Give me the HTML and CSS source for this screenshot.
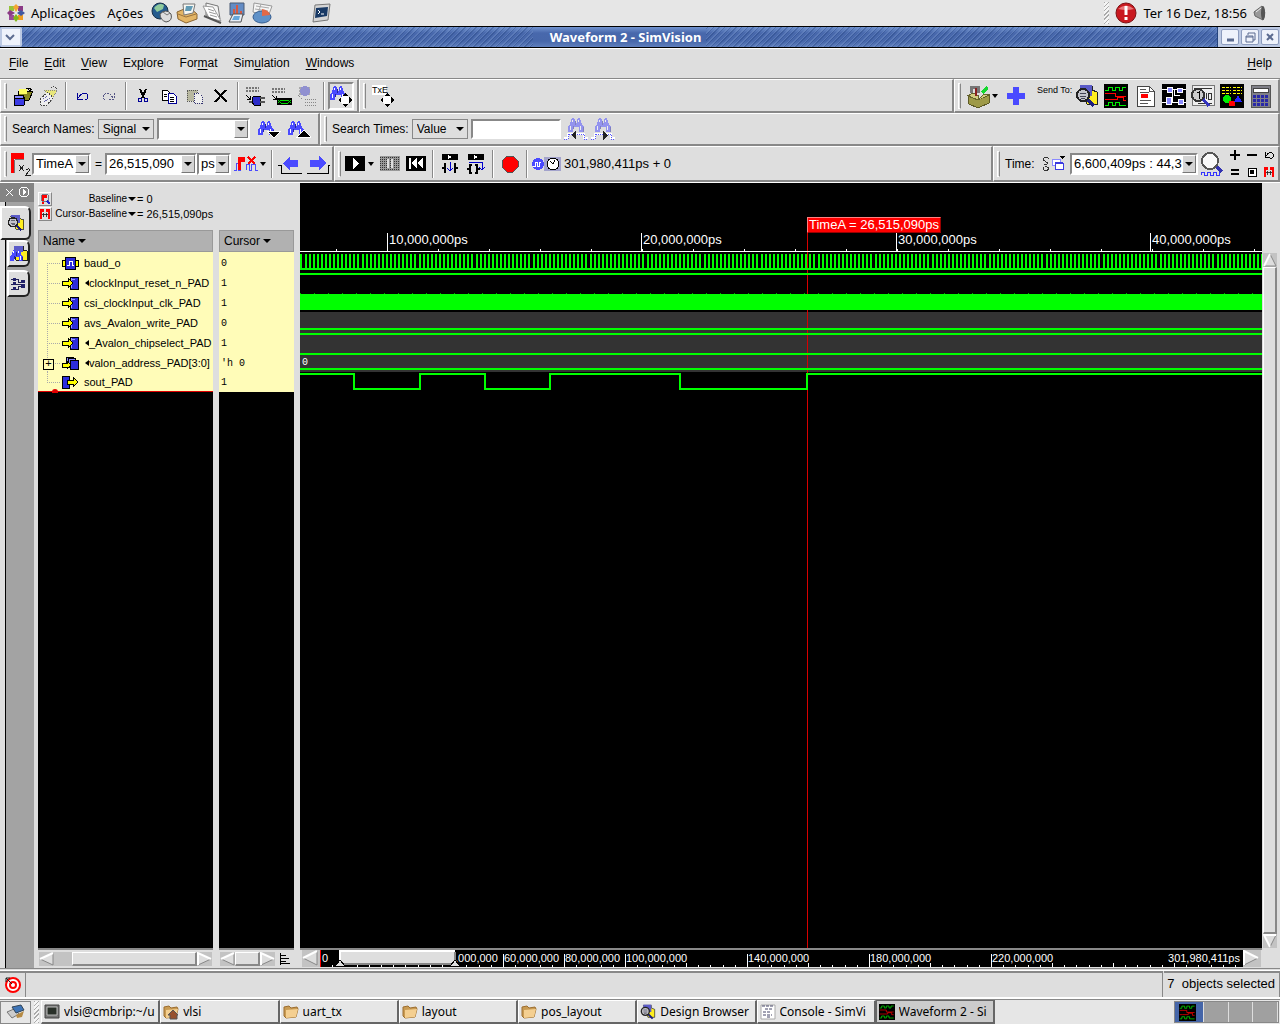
FILE: index.html
```
<!DOCTYPE html>
<html lang="pt-BR">
<head>
    <meta charset="utf-8">
    <title>Waveform 2 - SimVision</title>
    <link rel="stylesheet" href="styles.css">
</head>
<body>
    <!-- shared icons -->
    <svg class="defs" width="0" height="0">
        <symbol id="binoc" viewBox="0 0 16 16"><path d="M0 15V10L2 7L4 1H6L7 3V6H9V3L10 1H12L14 7L16 10V15H11V10H5V15Z" fill="#4a4aff"/><path d="M2 9H3V13H2ZM12 9H13V13H12ZM4 3H5V5H4ZM10 3H11V5H10Z" fill="#fff"/><path d="M5 9H6V12H5ZM15 10H16V15H15ZM7 4H8V8H7Z" fill="#2525a0"/></symbol>
        <symbol id="cross" viewBox="0 0 14 14"><path d="M7 0L10 4H11V5L14 7L10 10L7 14L4 10L0 7L4 4Z" fill="#fff"/><path d="M7 0L10 3H4ZM7 14L4 11H10ZM0 7L3 4V10ZM14 7L11 4V10Z" fill="#000"/></symbol>
        <symbol id="lens" viewBox="0 0 24 24"><path d="M5 2H17V6L22 8V20H12Z" fill="#ffee20" stroke="#222"/><path d="M5 1H17V12H5Z" fill="#5b5bc8"/><path d="M12 15L19 22" stroke="#202080" stroke-width="3"/><circle cx="8" cy="11" r="6" fill="#c4c4cc" stroke="#222" stroke-width="2"/><path d="M5 9H11M5 12H11M6 14H10" stroke="#445"/></symbol>
        <symbol id="waves" viewBox="0 0 24 24"><path fill="#000" d="M0 0H24V24H0Z"/><path d="M1 6H4V3H8V6H11V3H15V6H18V3H22M1 21H4V18H8V21H11V18H15V21H22" fill="none" stroke="#0e0"/><path d="M1 9H11V12H22M1 15H5M5 15H13V13H19V16H22" fill="none" stroke="#f00"/></symbol>
        <symbol id="folder" viewBox="0 0 16 16"><path d="M1 3L6 2L8 4L14 3L15 5L13 13L3 14L1 12Z" fill="#c99b52" stroke="#9c6d2f"/><path d="M3 6L15 5L13 13L3 14Z" fill="#f4cf91"/></symbol>
        <symbol id="padin" viewBox="0 0 18 14"><path d="M9 1H17V13H9Z" fill="#2d2ddc" stroke="#000"/><path d="M10 3H14M10 2V12" stroke="#9a9aff"/><path d="M1 5H7V2L12 7L7 12V9H1Z" fill="#ff0" stroke="#000"/></symbol>
        <symbol id="redflag" viewBox="0 0 14 14"><path d="M1 1H6V5H3V13H1ZM8 1H13V13H11V5H8Z" fill="#f00"/><path d="M3 8H11M5 6V10M9 6V10" stroke="#222"/></symbol>
        <symbol id="stepbox" viewBox="0 0 18 20"><path d="M1 0H17V6H1Z" fill="#000"/><path d="M7 1L11 3L7 5Z" fill="#fff"/></symbol>
    </svg>

    <header class="panel">
        <svg width="18" height="18" viewBox="0 0 18 18"><path d="M2 2H7V7H2Z" fill="#98c33a"/><path d="M11 2H16V7H11Z" fill="#8b3a86"/><path d="M2 11H7V16H2Z" fill="#9a4b98"/><path d="M11 11H16V16H11Z" fill="#f19c20"/><path d="M9 0L12 3L9 8L6 3Z" fill="#f4a630"/><path d="M0 9L3 6L8 9L3 12Z" fill="#8b3a86"/><path d="M18 9L14 6L10 9L14 12Z" fill="#4158a0"/><path d="M9 18L6 14L9 10L12 14Z" fill="#82b819"/></svg>
        <button>Aplicações</button>
        <button>Ações</button>
        <div class="launchers">
            <svg width="22" height="22" viewBox="0 0 22 22"><circle cx="9" cy="9" r="8" fill="#245b8e" stroke="#183048"/><path d="M3 6Q8 0 13 3L12 7L6 10Z" fill="#8fca9c"/><path d="M9 12Q15 6 20 12Q22 19 15 20Q9 18 9 12Z" fill="#ddd" stroke="#555"/><path d="M12 10L16 13L19 11" fill="none" stroke="#777"/></svg>
            <svg width="22" height="22" viewBox="0 0 22 22"><path d="M1 10L13 5L21 12V17L10 21L2 17Z" fill="#e3b565" stroke="#8a6431"/><path d="M7 2H19L17 11L8 13Z" fill="#f7f7f2" stroke="#777"/><path d="M10 4H17L15 9H9Z" fill="#629bb5"/><path d="M2 12L10 15L20 12" fill="none" stroke="#9a723c"/></svg>
            <svg width="22" height="22" viewBox="0 0 22 22"><path d="M5 1L17 4L19 17L5 13Z" fill="#f4f4f4" stroke="#777"/><path d="M2 4L12 5L20 19L8 16Z" fill="#fff" stroke="#999"/><path d="M7 7L13 9M8 10L15 12M9 13L16 15" stroke="#999"/><path d="M3 14L20 21" stroke="#555" stroke-width="2"/></svg>
            <svg width="22" height="22" viewBox="0 0 22 22"><path d="M4 1H18V13H4Z" fill="#638cc5" stroke="#4b5b75"/><path d="M8 7V13M11 3V13M15 9V13" stroke="#d55a42" stroke-width="2"/><path d="M7 12H17L15 20H3Z" fill="#e7edf5" stroke="#555"/><path d="M8 14H14L13 18H6Z" fill="#65a7db"/></svg>
            <svg width="23" height="22" viewBox="0 0 23 22"><path d="M3 1L21 4L17 15L2 10Z" fill="#f5f5f5" stroke="#999"/><path d="M5 4L18 6M4 7L17 9M10 2L7 12" stroke="#aaa"/><ellipse cx="11" cy="15" rx="9" ry="6" fill="#5f91c8" stroke="#345d90"/><path d="M11 14V7Q18 8 19 13Z" fill="#e36947"/></svg>
        </div>
        <svg class="terminal" width="20" height="20" viewBox="0 0 20 20"><path d="M3 2L18 1L16 17L1 19Z" fill="#d5d5d5" stroke="#777"/><path d="M4 5L16 4L15 13L3 15Z" fill="#193a65"/><path d="M6 7L8 9L6 11M9 11H12" fill="none" stroke="#fff"/></svg>
        <div class="tray">
            <i class="grip"></i>
            <svg width="24" height="24" viewBox="0 0 24 24"><circle cx="12" cy="12" r="10" fill="#c9181f" stroke="#7c1115"/><path d="M4 8Q12 1 20 8Q12 10 4 8" fill="#e7787b"/><path d="M12 5V14M12 16V19" stroke="#fff" stroke-width="3"/></svg>
            <span>Ter 16 Dez, 18:56</span>
            <svg width="18" height="20" viewBox="0 0 18 20"><path d="M2 9L10 3Q15 9 11 17L3 13Z" fill="#999" stroke="#666"/><ellipse cx="11" cy="10" rx="2" ry="7" fill="#555"/><path d="M4 9L9 5" stroke="#eee"/></svg>
        </div>
    </header>

    <div class="titlebar">
        <button class="winbtn" aria-label="Window menu"><svg width="16" height="16"><path d="M4 6L8 10L12 6" fill="none" stroke="#5b6b90" stroke-width="2"/></svg></button>
        <div class="hatch"></div>
        <h1>Waveform 2 - SimVision</h1>
        <div class="hatch"></div>
        <div class="winbtns">
            <button class="winbtn" aria-label="Minimize"><svg width="16" height="16"><path d="M5 10H12" stroke="#5b6b90" stroke-width="3"/></svg></button>
            <button class="winbtn" aria-label="Restore"><svg width="16" height="16"><path d="M6 5V3H13V10H11M4 6H11V12H4Z M4 7H11" fill="none" stroke="#5b6b90"/></svg></button>
            <button class="winbtn" aria-label="Close"><svg width="16" height="16"><path d="M5 4L11 10M11 4L5 10" stroke="#5b6b90" stroke-width="2"/></svg></button>
        </div>
    </div>

    <nav class="menubar">
        <button><u>F</u>ile</button>
        <button><u>E</u>dit</button>
        <button><u>V</u>iew</button>
        <button>Ex<u>p</u>lore</button>
        <button>For<u>m</u>at</button>
        <button>Sim<u>u</u>lation</button>
        <button><u>W</u>indows</button>
        <button class="help"><u>H</u>elp</button>
    </nav>

    <div class="toolrow row1">
        <div class="band">
            <i class="handle"></i>
            <button class="tool" aria-label="Open database"><svg width="22" height="22"><path d="M6 6H21L17 15H8Z" fill="#8a8a20" stroke="#000"/><path d="M7 4H15V9H7Z" fill="#ffff62"/><path d="M14 3H18V6M16 4L18 6L20 4" fill="none" stroke="#000"/><path d="M2 12V20Q7 22 12 20V12Z" fill="#3b3be4" stroke="#000"/><ellipse cx="7" cy="12" rx="5" ry="2" fill="#8a8aff" stroke="#000"/></svg></button>
            <button class="tool" aria-label="Reload"><svg width="22" height="22"><path d="M6 5H19L13 16Z" fill="#e8e67a" stroke="#888" stroke-dasharray="1 1"/><path d="M2 14L10 7L15 13L8 21L3 20Z" fill="#eee" stroke="#444" stroke-dasharray="2 1"/><path d="M5 14L10 11M6 17L12 13" stroke="#66a" stroke-dasharray="1 1"/><path d="M13 3Q17 0 19 5" fill="none" stroke="#444" stroke-dasharray="1 1"/></svg></button>
            <i class="sep"></i>
            <button class="tool" aria-label="Undo"><svg width="16" height="14"><path d="M2 4V10H8M3 9Q8 2 12 5Q15 9 10 11" fill="none" stroke="#000096"/></svg></button>
            <button class="tool" aria-label="Redo"><svg width="16" height="14"><path d="M13 4V10H8M12 9Q8 2 4 5Q1 8 4 11" fill="none" stroke="#555585" stroke-dasharray="2 1"/></svg></button>
            <i class="sep"></i>
            <button class="tool" aria-label="Cut"><svg width="14" height="18"><path d="M4 2L8 11M10 2L6 11" stroke="#000" stroke-width="2"/><circle cx="4" cy="13" r="2" fill="none" stroke="#000096"/><circle cx="10" cy="13" r="2" fill="none" stroke="#000096"/></svg></button>
            <button class="tool" aria-label="Copy"><svg width="18" height="16"><path d="M2 2H7L10 5V12H2Z" fill="#fff" stroke="#000"/><path d="M8 5H13L16 8V15H8Z" fill="#fff" stroke="#000096"/><path d="M4 6H7M4 8H7M10 9H14M10 11H14M10 13H14" stroke="#000"/></svg></button>
            <button class="tool" aria-label="Paste"><svg width="18" height="18"><path d="M1 3H11V14H1Z" fill="#b8b8a0" stroke="#555" stroke-dasharray="1 1"/><path d="M8 6H13L16 9V16H8Z" fill="#eee" stroke="#333370" stroke-dasharray="1 1"/></svg></button>
            <button class="tool" aria-label="Delete"><svg width="16" height="16"><path d="M2 2L14 14M13 2L2 14" stroke="#000" stroke-width="2"/></svg></button>
            <i class="sep"></i>
            <button class="tool" aria-label="Probe"><svg width="22" height="22"><path d="M2 3H15M2 6H15" stroke="#777" stroke-width="2" stroke-dasharray="2 1"/><path d="M2 10L6 14V11M6 14H3" fill="none" stroke="#000"/><path d="M10 11H16V20H10L8 17V13Z" fill="#2b2bc8" stroke="#000"/><path d="M16 13H21M16 17H21M5 17H8" stroke="#555" stroke-width="2"/></svg></button>
            <button class="tool" aria-label="Trace"><svg width="22" height="22"><path d="M2 4H15M2 7H15" stroke="#777" stroke-width="2" stroke-dasharray="2 1"/><path d="M2 10L6 14V11M6 14H3" fill="none" stroke="#000"/><path d="M7 13H22V20H7Z" fill="#000"/><path d="M8 15L11 18H18L21 15M8 18L11 15H18L21 18" fill="none" stroke="#0d0"/></svg></button>
            <button class="tool" aria-label="Driver"><svg width="22" height="22"><path d="M3 3H15M3 6H15M3 9H15" stroke="#aaa" stroke-width="2" stroke-dasharray="2 1"/><circle cx="9" cy="6" r="5" fill="#9090d0"/><path d="M2 10L6 14M9 14H21M9 17H21M9 20H21" stroke="#888" stroke-dasharray="1 1"/></svg></button>
            <i class="sep"></i>
            <button class="tool pressed" aria-label="Find"><svg width="22" height="22"><use href="#binoc" width="16" height="16"/><use href="#cross" x="8" y="8" width="14" height="14"/></svg></button>
        </div>
        <div class="band grow">
            <i class="handle"></i>
            <button class="tool text" aria-label="Text search"><svg width="24" height="22"><path fill="#fff" d="M0 0H14V10H0Z"/><text x="0" y="8" class="txe">TxE</text><use href="#cross" x="8" y="8" width="14" height="14"/></svg></button>
        </div>
        <div class="band tools">
            <i class="handle"></i>
            <button class="tool caret" aria-label="Toolbox"><svg width="25" height="24"><path d="M2 12L12 16L23 11V19L12 24L3 20Z" fill="#9e9a48" stroke="#5d5a25"/><path d="M2 12L7 9L13 12L12 16ZM12 16L17 11L24 10" fill="#d2cc80" stroke="#66632b"/><path d="M5 9V3H12V9" fill="none" stroke="#777" stroke-width="3"/><path d="M15 8L21 1L22 5L18 10Z" fill="#16d830"/><path d="M10 4V12" stroke="#8b2020" stroke-width="2"/></svg></button>
            <button class="tool plus" aria-label="Add"><svg width="20" height="20"><path d="M7 1H13V7H19V13H13V19H7V13H1V7H7Z" fill="#4a4aff"/></svg></button>
            <span class="sendto">Send To:</span>
            <button class="tool send" aria-label="Design Browser"><svg width="24" height="24"><use href="#lens"/></svg></button>
            <button class="tool send" aria-label="Waveform"><svg width="24" height="24"><use href="#waves"/></svg></button>
            <button class="tool send" aria-label="Source"><svg width="24" height="24"><path d="M4 2H16L21 7V22H4Z" fill="#fff" stroke="#444"/><path d="M16 2V7H21M7 5H13M7 8H16M7 16H18M7 19H15" fill="none" stroke="#555"/><path d="M8 10H15V14H8Z" fill="#f00"/></svg></button>
            <button class="tool send" aria-label="Schematic"><svg width="24" height="24"><path d="M0 0H24V24H0Z" fill="#000"/><path d="M0 5H24M10 5V18H24M0 18H10M12 5V11H18" fill="none" stroke="#fff"/><path d="M5 3H10V8H5ZM15 4H20V8H15ZM4 13H9V20H4ZM16 15H21V20H16Z" fill="#8a8aff" stroke="#fff"/></svg></button>
            <button class="tool send" aria-label="Memory"><svg width="24" height="24"><path d="M1 1H23V21H1Z" fill="#eee" stroke="#777"/><path d="M3 4H21M15 9V15M17 9H20V15H17ZM7 19H21" fill="none" stroke="#333"/><path d="M12 15L18 22" stroke="#3333c0" stroke-width="3"/><circle cx="7" cy="11" r="6" fill="#ccc" stroke="#333" stroke-width="2"/><path d="M6 9L8 8V15" fill="none" stroke="#000"/></svg></button>
            <button class="tool send" aria-label="Register"><svg width="24" height="24"><path d="M0 0H24V24H0Z" fill="#000"/><path d="M2 3H11M13 3H22M2 6H11M13 6H22M2 9H11M13 9H22" stroke="#ff0" stroke-dasharray="3 1"/><circle cx="7" cy="15" r="4" fill="#0e0"/><path d="M9 17H15V22H9Z" fill="#f00"/><path d="M18 11L22 18H14Z" fill="#22f"/></svg></button>
            <button class="tool send" aria-label="Calculator"><svg width="24" height="24"><path d="M2 1H21V23H2Z" fill="#808088" stroke="#555"/><path d="M4 4H19V8H4Z" fill="#fff" stroke="#444"/><path d="M4 12H19M4 16H19M4 20H19" stroke="#2929a8" stroke-width="3" stroke-dasharray="3 1"/></svg></button>
        </div>
    </div>

    <div class="toolrow row2">
        <div class="band names">
            <i class="handle"></i>
            <label for="searchNames">Search Names:</label>
            <span class="drop"><select aria-label="Search names by"><option>Signal</option></select></span>
            <span class="combo pattern"><input id="searchNames" type="text"><button aria-label="History"></button></span>
            <button class="find" aria-label="Find next"><svg width="24" height="20"><use href="#binoc" x="1" y="1" width="16" height="16"/><path d="M10 12H24L17 19Z" fill="#000" stroke="#fff"/></svg></button>
            <button class="find" aria-label="Find previous"><svg width="24" height="20"><use href="#binoc" x="1" y="1" width="16" height="16"/><path d="M10 18H24L17 11Z" fill="#000" stroke="#fff"/></svg></button>
        </div>
        <div class="band grow">
            <i class="handle"></i>
            <label for="searchTimes">Search Times:</label>
            <span class="drop"><select aria-label="Search times by"><option>Value</option></select></span>
            <input class="plain" id="searchTimes" type="text">
            <button class="edge" aria-label="Previous edge" disabled><svg width="24" height="24"><use href="#binoc" x="4" width="16" height="16" opacity=".5"/><path d="M0 21H4V17H20V21H24" fill="none" stroke="#fff" stroke-width="2"/><path d="M0 22H4V17H20V22H24" fill="none" stroke="#55f" stroke-dasharray="1 1"/><path d="M7 18L12 14V23Z" fill="#222"/></svg></button>
            <button class="edge" aria-label="Next edge" disabled><svg width="24" height="24"><use href="#binoc" x="4" width="16" height="16" opacity=".5"/><path d="M0 21H4V17H20V21H24" fill="none" stroke="#fff" stroke-width="2"/><path d="M0 22H4V17H20V22H24" fill="none" stroke="#55f" stroke-dasharray="1 1"/><path d="M17 18L12 14V23Z" fill="#222"/></svg></button>
        </div>
    </div>

    <div class="toolrow row3">
        <div class="band times">
            <i class="handle"></i>
            <svg width="22" height="24"><path d="M1 1H14V7H4V21H1Z" fill="#f00"/><path d="M4 8V21M5 7H14" stroke="#777"/><path d="M9 13L14 19M14 13L9 19M16 18Q20 15 19 19L16 23H21" fill="none" stroke="#222"/></svg>
            <span class="combo cursor"><input type="text" aria-label="Cursor" value="TimeA"><button aria-label="Choose cursor"></button></span>
            <label for="cursorTime">=</label>
            <span class="combo value"><input id="cursorTime" type="text" value="26,515,090"><button aria-label="History"></button></span>
            <span class="combo unit"><input type="text" aria-label="Unit" value="ps"><button aria-label="Choose unit"></button></span>
            <button class="tool caret clear" aria-label="Remove cursor"><svg width="25" height="18"><path d="M0 15H2V8H4V15H6V8M12 15V9H15V15H17V9H21V15H24" fill="none" stroke="#4a4aff"/><path d="M4 2H11V7H7V15H4Z" fill="#f00"/><path d="M14 2L21 9M21 2L14 9" stroke="#f00" stroke-width="2"/></svg></button>
            <i class="sep"></i>
            <button class="tool wide" aria-label="Previous edge"><svg width="25" height="20"><path d="M0 11H3V19H24" fill="none" stroke="#000"/><path d="M5 9L12 2V6H20V13H12V17Z" fill="#4a4aff"/></svg></button>
            <button class="tool wide" aria-label="Next edge"><svg width="25" height="20"><path d="M1 19H22V11H24" fill="none" stroke="#000"/><path d="M20 9L13 2V6H4V13H13V17Z" fill="#4a4aff"/></svg></button>
        </div>
        <div class="band grow">
            <i class="handle"></i>
            <button class="tool caret run" aria-label="Run"><svg width="20" height="15"><path d="M0 0H20V15H0Z" fill="#000"/><path d="M8 2V13L14 7Z" fill="#fff"/></svg></button>
            <button class="tool" aria-label="Interrupt"><svg width="20" height="15"><path d="M0 0H20V15H0Z" fill="#999"/><path d="M0 1H20M0 3H20M0 5H20M0 7H20M0 9H20M0 11H20M0 13H20" stroke="#333" stroke-dasharray="1 1"/><path d="M8 3V12M12 3V12" stroke="#ddd" stroke-width="2"/></svg></button>
            <button class="tool" aria-label="Reset"><svg width="20" height="15"><path d="M0 0H20V15H0Z" fill="#000"/><path d="M3 2H5V13H3ZM11 2V13L5 7ZM17 2V13L11 7Z" fill="#fff"/></svg></button>
            <i class="sep"></i>
            <button class="tool" aria-label="Step"><svg width="18" height="20"><use href="#stepbox" width="18" height="20"/><path d="M5 10H4V13L2 14L4 15V18H5M13 10H14V13L16 14L14 15V18H13" fill="none" stroke="#000" stroke-width="2"/><path d="M9 8V17M6 14L9 17L12 14" fill="none" stroke="#00c"/></svg></button>
            <button class="tool" aria-label="Step over"><svg width="18" height="20"><use href="#stepbox" width="18" height="20"/><path d="M5 11H3V14L1 15L3 16V19H5M8 11H10V14L12 15L10 16V19H8" fill="none" stroke="#000" stroke-width="2"/><path d="M2 8H15V16M12 13L15 16L18 13" fill="none" stroke="#00c"/></svg></button>
            <i class="sep"></i>
            <button class="tool" aria-label="Stop"><svg width="18" height="18"><path d="M6 1H12L17 6V12L12 17H6L1 12V6Z" fill="#f00" stroke="#555"/></svg></button>
            <i class="sep"></i>
            <svg width="30" height="16"><circle cx="7" cy="8" r="6" fill="#4a4aff"/><path d="M2 10H4V6H6V10H8V6H10" fill="none" stroke="#fff"/><path d="M13 1H30V15H13Z" fill="#a3a3cc"/><circle cx="22" cy="8" r="6" fill="#fff" stroke="#000"/><path d="M19 5L22 8L24 4" fill="none" stroke="#000"/></svg>
            <output class="simtime">301,980,411ps + 0</output>
        </div>
        <div class="band zoomband">
            <i class="handle"></i>
            <label for="range">Time:</label>
            <svg width="25" height="18"><path d="M8 4Q6 1 3 3L2 5L7 8L5 10L3 9M2 12Q2 16 6 16L8 13L4 11" fill="none" stroke="#333"/><path d="M11 4H19V10H11Z" fill="#fff" stroke="#8a8aff"/><path d="M14 8H22V14H14Z" fill="#fff" stroke="#3a3ae0"/><path d="M14 8H22" stroke="#3a3ae0" stroke-width="2"/><path d="M18 1H24L21 4Z" fill="#000"/></svg>
            <span class="combo range"><input id="range" type="text" value="6,600,409ps : 44,3"><button aria-label="History"></button></span>
            <svg width="25" height="26"><path d="M17 16L22 21" stroke="#3131b0" stroke-width="4"/><circle cx="10" cy="10" r="8" fill="#f8f8f8" stroke="#555" stroke-width="2"/><path d="M1 24V21H4V24H7V21H10V24H13V21H16V24H19V21" fill="none" stroke="#33f"/></svg>
            <div class="zooms">
                <button aria-label="Zoom in"><svg width="12" height="12"><path d="M6 1V11M1 6H11" stroke="#000" stroke-width="2"/></svg></button>
                <button aria-label="Zoom out"><svg width="12" height="12"><path d="M1 6H11" stroke="#000" stroke-width="2"/></svg></button>
                <button aria-label="Previous zoom"><svg width="12" height="12"><path d="M2 3V8H7M3 7Q7 1 10 5Q11 9 7 10" fill="none" stroke="#000"/></svg></button>
                <button aria-label="Zoom full"><svg width="12" height="12"><path d="M2 4H10M2 8H10" stroke="#000" stroke-width="2"/></svg></button>
                <button aria-label="Zoom fit"><svg width="12" height="12"><path d="M2 2H10V10H2Z" fill="#fff" stroke="#000"/><path d="M4 4H8V8H4Z" fill="#000"/></svg></button>
                <button aria-label="Zoom cursors"><svg width="12" height="12"><use href="#redflag" width="12" height="12"/></svg></button>
            </div>
        </div>
    </div>

    <main>
        <aside class="dock">
            <div class="dockhead">
                <button aria-label="Close pane"><svg width="12" height="12"><path d="M2 2L9 9M9 2L2 9" stroke="#fff"/></svg></button>
                <button aria-label="Expand pane"><svg width="13" height="13"><circle cx="6" cy="6" r="5" fill="none" stroke="#fff"/><path d="M5 3V9L8 6Z" fill="#fff"/></svg></button>
            </div>
            <div class="tabs">
                <button class="active" aria-label="Design Browser"><svg width="18" height="18"><use href="#lens"/></svg></button>
                <button aria-label="Search"><svg width="18" height="18"><path d="M4 1H13V5L17 6V15H6Z" fill="#ffee20" stroke="#222"/><path d="M4 1H13V7H4Z" fill="#5b5bc8"/><use href="#binoc" y="4" width="13" height="13"/></svg></button>
                <button aria-label="Drivers"><svg width="18" height="14"><path d="M1 2H8V5H13M1 7H13M1 12H8V9H13" fill="none" stroke="#225"/><path d="M3 1H6V4H3ZM3 5H6V8H3ZM3 10H6V13H3ZM11 3H15V6H11ZM11 7H15V11H11Z" fill="#22226a"/></svg></button>
            </div>
        </aside>

        <section class="signals">
            <div class="baseline">
                <button class="mini" aria-label="Set baseline"><svg width="12" height="12"><path d="M3 1H8V5H5V11H3Z" fill="#f00"/><circle cx="6" cy="5" r="4" fill="none" stroke="#778"/><path d="M8 8L11 11" stroke="#22c" stroke-width="2"/></svg></button>
                <button class="base">Baseline<i class="tri"></i></button><output>= 0</output>
                <button class="mini" aria-label="Lock baseline"><svg width="12" height="12"><use href="#redflag" width="12" height="12"/></svg></button>
                <button class="base">Cursor-Baseline<i class="tri"></i></button><output>= 26,515,090ps</output>
            </div>
            <div class="panes">
                <div class="pane name">
                    <table>
                        <thead><tr><th>Name <i class="tri"></i></th></tr></thead>
                        <tbody>
                            <tr class="first"><td><i class="leaf"></i><svg width="18" height="14"><path d="M1 4H17V10H1Z" fill="#ff0" stroke="#000"/><path d="M4 1H14V13H4Z" fill="#2d2ddc" stroke="#000"/><path d="M6 9H8V5H11V9H13" fill="none" stroke="#fff"/></svg><span>baud_o</span></td></tr>
                            <tr><td><i class="leaf"></i><svg width="18" height="14"><use href="#padin"/></svg><span><i class="cut"></i>clockInput_reset_n_PAD</span></td></tr>
                            <tr><td><i class="leaf"></i><svg width="18" height="14"><use href="#padin"/></svg><span>csi_clockInput_clk_PAD</span></td></tr>
                            <tr><td><i class="leaf"></i><svg width="18" height="14"><use href="#padin"/></svg><span>avs_Avalon_write_PAD</span></td></tr>
                            <tr><td><i class="leaf"></i><svg width="18" height="14"><use href="#padin"/></svg><span><i class="cut"></i>_Avalon_chipselect_PAD</span></td></tr>
                            <tr><td><i class="leaf open"></i><svg width="18" height="14"><path d="M5 1H12V9H5Z" fill="#8a8aff" stroke="#000"/><path d="M7 2H14V11H7Z" fill="#8a8aff" stroke="#000"/><path d="M9 4H17V13H9Z" fill="#2d2ddc" stroke="#000"/><path d="M1 7H6V5L10 9L6 13V11H1Z" fill="#ff0" stroke="#000"/></svg><span><i class="cut"></i>valon_address_PAD[3:0]</span></td></tr>
                            <tr class="last"><td><i class="leaf"></i><svg width="18" height="14"><path d="M1 1H8V13H1Z" fill="#2d2ddc" stroke="#000"/><path d="M6 5H12V2L17 7L12 12V9H6Z" fill="#ff0" stroke="#000"/></svg><span>sout_PAD</span></td></tr>
                        </tbody>
                    </table>
                    <div class="hscroll">
                        <button aria-label="Scroll left"><svg width="15" height="15"><path d="M14 1L1 7L14 13Z" fill="#ddd" stroke="#888"/><path d="M14 1L1 7" stroke="#fff" stroke-width="2"/></svg></button>
                        <i class="space"></i><i class="thumb"></i>
                        <button aria-label="Scroll right"><svg width="15" height="15"><path d="M1 1L14 7L1 13Z" fill="#ddd" stroke="#888"/><path d="M1 13V1L14 7" fill="none" stroke="#fff" stroke-width="2"/></svg></button>
                    </div>
                </div>
                <div class="pane cursorpane">
                    <table>
                        <thead><tr><th>Cursor <i class="tri"></i></th></tr></thead>
                        <tbody>
                            <tr class="first"><td>0</td></tr>
                            <tr><td>1</td></tr>
                            <tr><td>1</td></tr>
                            <tr><td>0</td></tr>
                            <tr><td>1</td></tr>
                            <tr><td>'h 0</td></tr>
                            <tr class="last"><td>1</td></tr>
                        </tbody>
                    </table>
                    <div class="hscroll">
                        <button aria-label="Scroll left"><svg width="15" height="15"><path d="M14 1L1 7L14 13Z" fill="#ddd" stroke="#888"/><path d="M14 1L1 7" stroke="#fff" stroke-width="2"/></svg></button>
                        <i class="thumb"></i>
                        <button aria-label="Scroll right"><svg width="15" height="15"><path d="M1 1L14 7L1 13Z" fill="#ddd" stroke="#888"/><path d="M1 13V1L14 7" fill="none" stroke="#fff" stroke-width="2"/></svg></button>
                        <button class="justify" aria-label="Justify"><svg class="crisp" width="14" height="14"><path d="M2 1V13M3 3H8M3 6H11M3 9H8M3 11H12" stroke="#000"/></svg></button>
                    </div>
                </div>
            </div>
        </section>

        <section class="wave">
            <div class="wavebody">
                <svg class="plot" width="100%" height="100%">
                    <defs>
                        <pattern id="baud" x="5" y="71" width="57" height="14" patternUnits="userSpaceOnUse">
                            <path d="M0 7H54" stroke="#0f0" stroke-width="14" stroke-dasharray="2 2"/>
                        </pattern>
                        <pattern id="clk" width="14" height="1" y="110" patternUnits="userSpaceOnUse"><rect width="1" height="1" fill="#0a0"/></pattern>
                        <pattern id="minor" x="36" y="66" width="51" height="2" patternUnits="userSpaceOnUse"><rect width="1" height="2" fill="#fff"/></pattern>
                    </defs>
                    <rect y="129" width="100%" height="60" fill="#333"/>
                    <rect x="507" y="50" width="1" height="100%" fill="#d80000"/>
                    <g fill="#fff">
                        <rect y="68" width="100%" height="1"/>
                        <rect y="66" width="100%" height="2" fill="url(#minor)"/>
                        <rect x="87" y="50" width="1" height="18"/>
                        <rect x="341" y="50" width="1" height="18"/>
                        <rect x="596" y="50" width="1" height="18"/>
                        <rect x="850" y="50" width="1" height="18"/>
                        <text x="89" y="61">10,000,000ps</text>
                        <text x="343" y="61">20,000,000ps</text>
                        <text x="598" y="61">30,000,000ps</text>
                        <text x="852" y="61">40,000,000ps</text>
                        <text x="2" y="182" class="bus">0</text>
                    </g>
                    <rect y="71" width="100%" height="14" fill="url(#baud)"/>
                    <g fill="#0f0">
                        <rect y="85" width="100%" height="2"/>
                        <rect y="90" width="100%" height="2"/>
                        <rect y="110" width="100%" height="1" fill="url(#clk)"/>
                        <rect y="111" width="100%" height="16"/>
                        <rect y="145" width="100%" height="2"/>
                        <rect y="150" width="100%" height="2"/>
                        <rect y="170" width="100%" height="2"/>
                        <rect y="185" width="100%" height="2"/>
                    </g>
                    <path d="M0 191H54V206H120V191H185V206H250V191H380V206H507V191H4000" fill="none" stroke="#0f0" stroke-width="2"/>
                </svg>
                <div class="flag">TimeA = 26,515,090ps</div>
            </div>
            <div class="vscroll">
                <button aria-label="Scroll up"><svg width="14" height="14"><path d="M7 1L1 13H13Z" fill="#ddd" stroke="#888"/><path d="M7 1L1 13" stroke="#fff" stroke-width="2"/></svg></button>
                <i class="thumb"></i>
                <button aria-label="Scroll down"><svg width="14" height="14"><path d="M1 1H13L7 13Z" fill="#ddd" stroke="#888"/><path d="M7 13L1 1H13" fill="none" stroke="#fff" stroke-width="2"/></svg></button>
            </div>
            <div class="overview">
                <button aria-label="Scroll left"><svg width="17" height="17"><path d="M15 1L1 8L15 15Z" fill="#ddd" stroke="#888"/><path d="M15 1L1 8" stroke="#fff" stroke-width="2"/></svg></button>
                <div class="scale">
                    <svg class="crisp" width="100%" height="100%">
                        <defs><pattern id="otick" x="0" y="15" width="61" height="2" patternUnits="userSpaceOnUse"><path d="M0 0H1V2H0ZM12 0H13V2H12ZM24 0H25V2H24ZM37 0H38V2H37ZM49 0H50V2H49Z" fill="#fff"/></pattern></defs>
                        <rect width="100%" height="2" y="15" fill="url(#otick)"/>
                        <rect width="1" height="17" x="0" fill="#f00"/>
                        <path d="M183 4V16M244 4V16M305 4V16M366 13V16M427 4V16M488 13V16M549 4V16M610 13V16M671 4V16M732 13V16M793 13V16M854 13V16" stroke="#fff"/>
                        <g fill="#fff">
                            <text x="2" y="12">0</text>
                            <text x="135" y="12">,000,000</text>
                            <text x="184" y="12">60,000,000</text>
                            <text x="245" y="12">80,000,000</text>
                            <text x="306" y="12">100,000,000</text>
                            <text x="428" y="12">140,000,000</text>
                            <text x="550" y="12">180,000,000</text>
                            <text x="672" y="12">220,000,000</text>
                            <text x="100%" y="12" dx="-3" text-anchor="end">301,980,411ps</text>
                        </g>
                        <path d="M20 1H135V14H20Z" fill="#dedede"/>
                        <path d="M20 14V1H135" fill="none" stroke="#fff" stroke-width="2"/>
                        <path d="M21 14H135V2" fill="none" stroke="#888" stroke-width="2"/>
                        <path d="M15 16L20 10L25 16ZM130 16L135 10L140 16Z" fill="#dedede" stroke="#000"/>
                    </svg>
                </div>
                <button aria-label="Scroll right"><svg width="17" height="17"><path d="M1 1L15 8L1 15Z" fill="#ddd" stroke="#888"/><path d="M1 15V1L15 8" fill="none" stroke="#fff" stroke-width="2"/></svg></button>
            </div>
        </section>
    </main>

    <footer class="status">
        <svg width="24" height="24"><circle cx="13" cy="12" r="7" fill="#fff" stroke="#f00" stroke-width="2"/><circle cx="13" cy="12" r="3" fill="#fff" stroke="#f00" stroke-width="2"/><path d="M6 5L12 11M6 5V9M6 5H10" stroke="#222" stroke-width="1"/></svg>
        <span class="message"></span>
        <span class="count">7&nbsp; objects selected</span>
    </footer>

    <nav class="taskbar">
        <button class="desk" aria-label="Show desktop"><svg width="20" height="16"><path d="M1 8L8 5L13 10L6 14Z" fill="#ccc" stroke="#777"/><path d="M6 3L15 1L18 6L10 9Z" fill="#3e75b8" stroke="#345"/><path d="M10 11L18 7L16 13L11 14Z" fill="#b68b45"/></svg></button>
        <i class="grip"></i>
        <div class="tasks">
            <button><svg width="16" height="16"><path d="M1 1H15V14H1Z" fill="#777" stroke="#444"/><path d="M3 3H13V11H3Z" fill="#293029" stroke="#bbb"/></svg><span>vlsi@cmbrip:~/u</span></button>
            <button><svg width="16" height="16"><use href="#folder"/><path d="M5 11L10 6L15 11H14V15H7V11Z" fill="#96502d" stroke="#555"/></svg><span>vlsi</span></button>
            <button><svg width="16" height="16"><use href="#folder"/></svg><span>uart_tx</span></button>
            <button><svg width="16" height="16"><use href="#folder"/></svg><span>layout</span></button>
            <button><svg width="16" height="16"><use href="#folder"/></svg><span>pos_layout</span></button>
            <button><svg width="16" height="16"><use href="#lens"/></svg><span>Design Browser</span></button>
            <button><svg width="16" height="16"><path d="M1 1H15V15H1Z" fill="#fff" stroke="#aaa"/><path d="M2 2H13M5 5H12M3 8H11M3 11H12M7 13H11" stroke="#446" stroke-dasharray="3 1"/></svg><span>Console - SimVi</span></button>
            <button class="current"><svg width="16" height="16"><use href="#waves"/></svg><span>Waveform 2 - Si</span></button>
        </div>
        <div class="pager">
            <button class="here" aria-label="Workspace 1"><svg width="17" height="17"><use href="#waves"/></svg></button>
            <button aria-label="Workspace 2"></button>
            <button aria-label="Workspace 3"></button>
            <button aria-label="Workspace 4"></button>
        </div>
    </nav>
</body>
</html>
```
FILE: styles.css
```
* {
    box-sizing: border-box;
}
body {
    margin: 0;
    height: 100vh;
    display: flex;
    flex-direction: column;
    overflow: hidden;
    background: #dedede;
    color: #000;
    font-family: "Liberation Sans", sans-serif;
    font-size: 12px;
}
svg {
    display: block;
    flex: none;
}
.defs {
    position: absolute;
}
i {
    display: block;
    flex: none;
}
button, input, select {
    margin: 0;
    padding: 0;
    border: 0;
    background: none;
    color: inherit;
    font: inherit;
}

/* desktop panel */
.panel {
    height: 26px;
    flex: none;
    display: flex;
    align-items: center;
    padding-left: 7px;
    background: #e6e6e6;
    font: 13px "Noto Sans", sans-serif;
}
.panel > button {
    margin-left: 6px;
    margin-right: 6px;
}
.launchers {
    display: flex;
    gap: 3px;
    margin-left: 2px;
}
.terminal {
    margin-left: 38px;
}
.tray {
    display: flex;
    align-items: center;
    gap: 5px;
    margin-left: auto;
    padding-right: 10px;
}
.grip {
    width: 5px;
    height: 22px;
    background: repeating-linear-gradient(135deg, #aaa 0 1px, #f4f4f4 1px 3px);
}

/* window title */
.titlebar {
    height: 22px;
    flex: none;
    display: flex;
    align-items: center;
    border-top: 1px solid #000;
    border-bottom: 1px solid #000;
    background: linear-gradient(#7294d0, #4868ac 30%, #4767aa 70%, #5f7fbd);
    color: #fff;
}
.titlebar h1 {
    margin: 0 5px 0 17px;
    font: bold 13px "Noto Sans", sans-serif;
}
.hatch {
    flex: 1;
    height: 20px;
    background: repeating-linear-gradient(135deg, #7f9cd055 0 1px, #203f7c55 1px 2px, transparent 2px 4px);
}
.winbtn {
    width: 18px;
    height: 16px;
    border: 1px solid #8c9bbd;
    border-radius: 2px;
    background: #eef2fb;
}
.titlebar > .winbtn {
    width: 22px;
    height: 20px;
    border: 2px solid #bcc9e3;
}
.winbtns {
    display: flex;
    align-items: center;
    gap: 2px;
    height: 20px;
    padding: 0 1px 0 3px;
    background: #bcc9e3;
    border-left: 1px solid #26457e;
}

.menubar {
    height: 31px;
    flex: none;
    display: flex;
    align-items: center;
    gap: 16px;
    padding: 0 8px 2px 9px;
    border-top: 1px solid #fff;
    border-bottom: 1px solid #888;
}
.menubar u {
    text-underline-offset: 2px;
}
.menubar .help {
    margin-left: auto;
}

/* tool bars */
.toolrow {
    flex: none;
    display: flex;
}
.band {
    display: flex;
    align-items: center;
    border: 1px solid #fff;
    border-right: 2px solid #888;
    border-bottom: 2px solid #888;
    padding: 0 3px;
}
.toolrow svg, .dock svg, .signals td svg, .mini svg, .crisp {
    shape-rendering: crispEdges;
}
.row1 .band {
    height: 34px;
}
.row2 .band {
    height: 33px;
}
.row3 .band {
    height: 36px;
}
.grow {
    flex: 1;
}
.handle {
    width: 3px;
    height: 26px;
    margin-right: 3px;
    border: 1px solid #fff;
    border-right-color: #888;
}
.sep {
    width: 2px;
    height: 28px;
    margin: 0 3px;
    border-left: 1px solid #888;
    border-right: 1px solid #fff;
}
.tool {
    width: 26px;
    height: 28px;
    flex: none;
    display: flex;
    align-items: center;
    justify-content: center;
}
.pressed {
    border: 2px solid #888;
    border-right-color: #fff;
    border-bottom-color: #fff;
}
.text {
    margin-left: 2px;
}
.txe {
    font-size: 9px;
}
.caret {
    width: 35px;
    gap: 1px;
}
.caret::after, .tri {
    content: "";
    flex: none;
    border: 3px solid transparent;
    border-top: 4px solid #000;
    border-bottom: 0;
}
.tools {
    width: 326px;
}
.plus {
    margin: 0 8px 0 4px;
}
.sendto {
    margin: 0 auto 12px 0;
    font-size: 9px;
    white-space: nowrap;
}
.send {
    width: 29px;
}
.row2 label {
    margin: 0 3px 0 2px;
    white-space: nowrap;
}
.drop {
    position: relative;
    margin-right: 3px;
}
.drop select {
    width: 56px;
    height: 20px;
    padding-left: 4px;
    border: 1px solid #888;
    border-radius: 0;
    appearance: none;
}
.drop::after {
    content: "";
    position: absolute;
    right: 4px;
    top: 8px;
    border: 4px solid transparent;
    border-top-color: #000;
    border-bottom: 0;
    pointer-events: none;
}
.combo {
    display: flex;
    height: 22px;
    border: 2px solid #888;
    border-right-color: #fff;
    border-bottom-color: #fff;
    background: #fff;
}
.combo input {
    flex: 1;
    min-width: 0;
    padding-left: 2px;
    font-size: 13px;
}
.combo button {
    width: 14px;
    display: flex;
    align-items: center;
    justify-content: center;
    border: 1px solid #fff;
    border-right-color: #777;
    border-bottom-color: #777;
    background: #d4d4d4;
}
.combo button::after {
    content: "";
    border: 4px solid transparent;
    border-top-color: #000;
    border-bottom: 0;
}
.pattern {
    width: 93px;
    margin-right: 3px;
}
.plain {
    width: 90px;
    height: 20px;
    border: 2px solid #888;
    border-right-color: #fff;
    border-bottom-color: #fff;
    background: #fff;
}
.find {
    width: 30px;
    padding-left: 4px;
}
.names {
    width: 320px;
}
.edge {
    width: 27px;
    padding-left: 3px;
}
.times {
    width: 334px;
}
.cursor {
    width: 59px;
}
.times label {
    margin: 0 3px 0 4px;
}
.value {
    width: 92px;
}
.unit {
    width: 34px;
}
.clear {
    margin: 0 1px;
}
.wide {
    width: 28px;
}
.run {
    width: 31px;
    gap: 3px;
    margin-right: 2px;
}
.simtime {
    margin-left: 3px;
    font-size: 13px;
}
.zoomband label {
    width: 36px;
    margin-left: 2px;
}
.range {
    width: 128px;
    margin: 0 2px 0 4px;
}
.zooms {
    display: grid;
    grid-template-columns: 12px 12px 12px;
    gap: 5px;
    margin-left: 4px;
}
.zoomband {
    width: 287px;
}

/* main area */
main {
    flex: 1;
    min-height: 0;
    display: flex;
    border-top: 1px solid #fff;
    border-bottom: 1px solid #888;
}
.dock {
    width: 34px;
    margin-right: 4px;
    display: flex;
    flex-direction: column;
    flex: none;
}
.dockhead {
    height: 19px;
    display: flex;
    align-items: center;
    gap: 2px;
    padding-left: 4px;
    background: #848484;
}
.tabs {
    flex: 1;
    padding: 4px 0 0 7px;
    background: linear-gradient(90deg, #dedede 5px, #000 5px 6px, #a3a3a3 6px);
}
.tabs button {
    width: 23px;
    height: 27px;
    display: flex;
    align-items: center;
    justify-content: center;
    margin-bottom: 3px;
    border: 2px solid #fff;
    border-right: 2px solid #222;
    border-bottom: 2px solid #222;
    border-radius: 0 6px 6px 0;
    background: #dedede;
}
.tabs .active {
    width: 31px;
    height: 34px;
    margin: 0 0 0 -7px;
}
.signals {
    width: 256px;
    margin-right: 6px;
    flex: none;
    display: flex;
    flex-direction: column;
}
.baseline {
    height: 47px;
    display: grid;
    grid-template-columns: 16px 83px 1fr;
    grid-template-rows: 15px 15px;
    padding-top: 8px;
    align-items: center;
    font-size: 10px;
}
.baseline output {
    font-size: 11px;
}
.mini {
    width: 14px;
    height: 14px;
    border: 1px solid #fff;
    border-right-color: #888;
    border-bottom-color: #888;
}
.base {
    display: flex;
    align-items: center;
    justify-content: flex-end;
    gap: 1px;
    padding-right: 1px;
}
.base .tri {
    border-width: 4px 4px 0;
}
.panes {
    flex: 1;
    display: flex;
    gap: 6px;
}
.pane {
    display: flex;
    flex-direction: column;
    background: #000;
}
.name {
    width: 175px;
}
.cursorpane {
    width: 75px;
}
.pane table {
    width: 100%;
    table-layout: fixed;
    border-collapse: separate;
    border-spacing: 0;
}
.pane th {
    height: 22px;
    padding: 0 4px;
    border: 1px solid #999;
    background: #b1b1b1;
    font-weight: normal;
    text-align: left;
}
.pane th .tri {
    display: inline-block;
    border-width: 4px 4px 0;
    vertical-align: 2px;
}
.pane td {
    height: 20px;
    padding: 0;
    background: #fffcb8;
    white-space: nowrap;
}
.name td {
    display: flex;
    align-items: center;
    font-size: 11px;
}
.name td span {
    display: flex;
    align-items: center;
    margin-left: 5px;
}
.leaf {
    position: relative;
    width: 23px;
    height: 20px;
    background:
        repeating-linear-gradient(#aaa 0 1px, transparent 1px 2px) 9px 0 / 1px 100% no-repeat,
        repeating-linear-gradient(90deg, #aaa 0 1px, transparent 1px 2px) 9px 10px / 13px 1px no-repeat;
}
.first .leaf {
    background-position: 9px 10px;
}
.last .leaf {
    background-size: 1px 10px, 13px 1px;
}
.open::before {
    content: "+";
    position: absolute;
    left: 5px;
    top: 6px;
    width: 9px;
    height: 9px;
    border: 1px solid #000;
    background: #fffcb8;
    font-size: 11px;
    line-height: 7px;
    text-align: center;
    font-style: normal;
}
.cut {
    margin-left: 1px;
    border: 3px solid transparent;
    border-left: 0;
    border-right: 4px solid #000;
}
.pane .first td {
    height: 21px;
    padding-top: 1px;
}
.pane .last td {
    height: 19px;
}
.name .last td {
    position: relative;
    border-bottom: 1px solid #e00000;
}
/* insertion mark under the last signal */
.name .last td::after {
    content: "";
    position: absolute;
    left: 14px;
    bottom: -2px;
    width: 6px;
    height: 4px;
    border-radius: 3px 3px 0 0;
    background: #e00000;
}
.cursorpane td {
    padding-left: 2px;
    font: 10px "Liberation Mono", monospace;
}
.hscroll {
    height: 20px;
    margin-top: auto;
    padding: 2px 1px;
    display: flex;
    border-top: 2px solid #888;
    background: #dedede;
}
.hscroll button {
    width: 15px;
    background: #c3c3c3;
}
.hscroll .space {
    width: 18px;
    background: #c3c3c3;
}
.thumb {
    flex: 1;
    border: 1px solid #fff;
    border-right: 2px solid #888;
    border-bottom: 2px solid #888;
    background: #dedede;
}
.hscroll .justify {
    width: 18px;
    padding-left: 3px;
    background: #dedede;
}
.wave {
    flex: 1;
    min-width: 0;
    display: grid;
    grid-template-columns: 1fr 18px;
    grid-template-rows: 1fr 20px;
}
.wavebody {
    position: relative;
    min-width: 0;
    background: #000;
}
.plot {
    position: absolute;
    shape-rendering: crispEdges;
    font-size: 13px;
}
.plot .bus {
    font: 10px "Liberation Mono", monospace;
}
.flag {
    position: absolute;
    left: 507px;
    top: 34px;
    height: 16px;
    padding: 0 1px;
    border: 1px solid #ff8080;
    border-right-color: #900;
    border-bottom-color: #900;
    background: #f00;
    color: #fff;
    font-size: 13px;
    line-height: 14px;
    white-space: nowrap;
}
.vscroll {
    display: flex;
    flex-direction: column;
    margin-top: 70px;
    padding: 0 3px 0 1px;
}
.vscroll button {
    height: 14px;
    background: #c3c3c3;
}
.overview {
    display: flex;
    padding: 0 1px 1px 2px;
    border-top: 2px solid #888;
}
.overview button {
    width: 18px;
    background: #c3c3c3;
}
.scale {
    flex: 1;
    min-width: 0;
    background: #000;
    font-size: 11px;
}

/* status line */
.status {
    height: 29px;
    margin-top: 1px;
    flex: none;
    display: flex;
    border-top: 1px solid #fff;
    border-bottom: 2px solid #fff;
}
.status > * {
    border-top: 2px solid #888;
    border-right: 1px solid #888;
}
.status svg {
    width: 26px;
    height: 26px;
}
.message {
    flex: 1;
}
.count {
    margin-left: 1px;
    padding: 3px 4px 0 3px;
    font-size: 13px;
}

.taskbar {
    height: 25px;
    flex: none;
    display: flex;
    align-items: center;
    background: #e6e6e6;
    border-top: 1px solid #888;
    font: 12px "Noto Sans", sans-serif;
}
.taskbar button {
    display: flex;
    align-items: center;
}
.desk {
    width: 31px;
    height: 23px;
    padding-left: 5px;
    margin-right: 3px;
    border: 1px solid #888;
}
.tasks {
    flex: 1;
    max-width: 954px;
    min-width: 0;
    display: flex;
    margin-left: 2px;
}
.tasks button {
    flex: 1;
    min-width: 0;
    height: 24px;
    gap: 4px;
    padding-left: 2px;
    overflow: hidden;
    white-space: nowrap;
    border: 1px solid #fff;
    border-right: 2px solid #666;
    border-bottom: 2px solid #666;
}
.tasks span {
    flex: 1;
    min-width: 0;
    overflow: hidden;
    text-align: left;
}
.tasks .current {
    border-color: #666;
    background: #ccc;
}
.pager {
    display: flex;
    width: 105px;
    height: 22px;
    margin: 0 1px 0 auto;
    border: 1px solid #888;
}
.pager button {
    flex: 1;
    border-right: 1px solid #dedede;
    background: #a0a0a0;
}
.pager .here {
    padding-left: 4px;
    background: #4565a8;
}
```
